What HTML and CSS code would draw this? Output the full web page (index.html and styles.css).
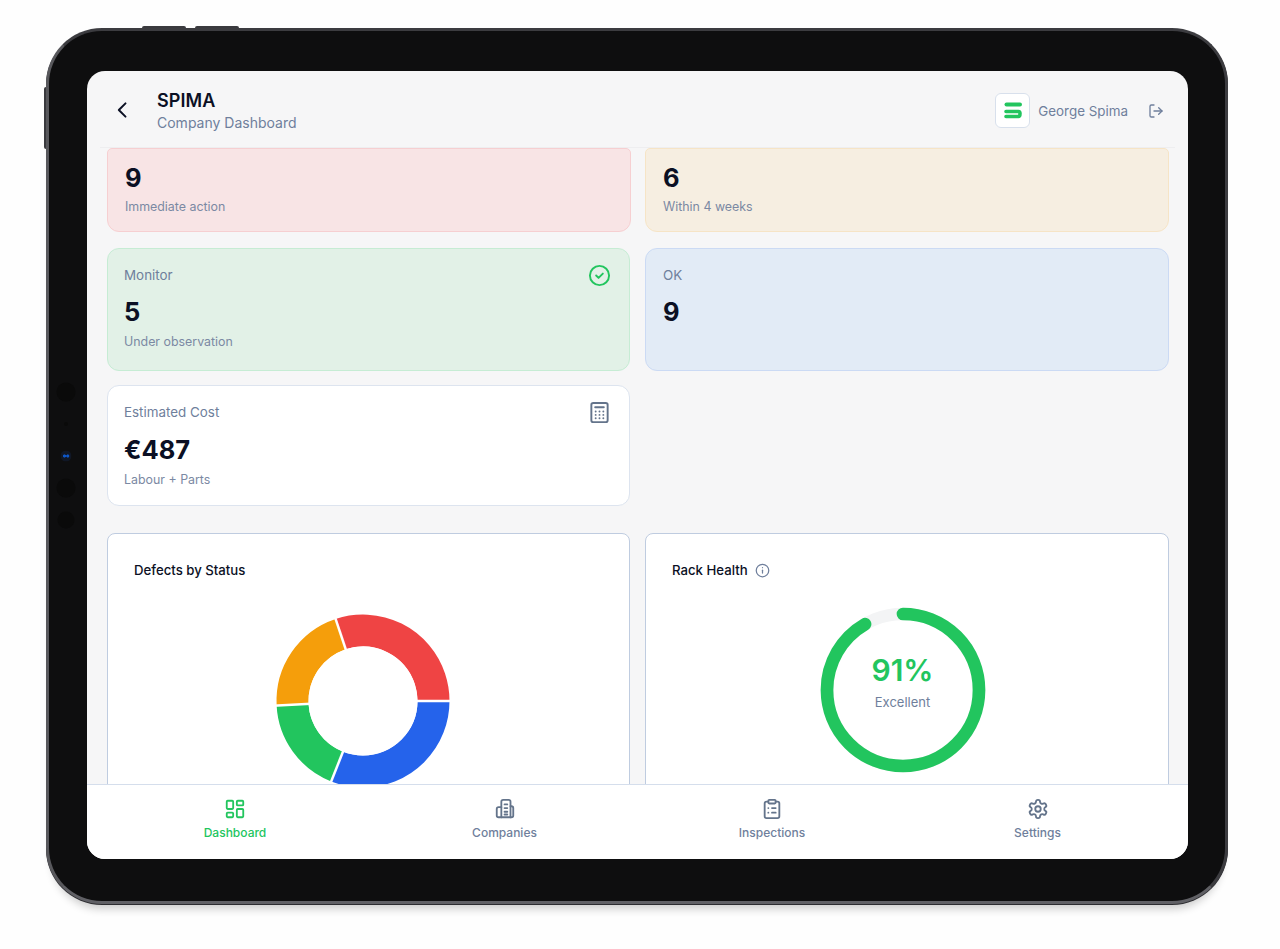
FILE: index.html
```html
<!DOCTYPE html>
<html lang="en">
<head>
<meta charset="utf-8">
<title>SPIMA Company Dashboard</title>
<link rel="stylesheet" href="styles.css">
</head>
<body>
<div class="device">
  <span class="btn btn-top-a"></span>
  <span class="btn btn-top-b"></span>
  <span class="btn btn-left"></span>
  <span class="lens lens-a"></span>
  <span class="lens lens-b"></span>
  <span class="lens lens-c"></span>
  <span class="lens lens-d"></span>
  <span class="lens lens-e"></span>
  <div class="screen">
    <header class="header">
      <svg class="back" viewBox="0 0 24 24" fill="none" stroke="currentColor" stroke-width="2.4" stroke-linecap="round" stroke-linejoin="round"><path d="M15 4 7 12l8 8"/></svg>
      <div class="titles">
        <div class="title">SPIMA</div>
        <div class="subtitle">Company Dashboard</div>
      </div>
      <div class="user">
        <div class="logo">
          <svg viewBox="0 0 18 18" fill="none" stroke="#22c55e" stroke-width="4" stroke-linecap="round" stroke-linejoin="round"><path d="M2.500 2.500H16"/><path d="M2 9.500H14.500Q16 9.500 16 11.500Q16 14.500 14.500 14.500H2" stroke-width="3.600"/></svg>
        </div>
        <span class="user-name">George Spima</span>
        <svg class="logout" viewBox="0 0 24 24" fill="none" stroke="currentColor" stroke-width="2" stroke-linecap="round" stroke-linejoin="round"><path d="M9 21H5a2 2 0 0 1-2-2V5a2 2 0 0 1 2-2h4"/><path d="m16 17 5-5-5-5"/><path d="M21 12H9"/></svg>
      </div>
    </header>
    <main class="content">
      <section class="stats">
        <article class="card cut red">
          <div class="num">9</div>
          <div class="sub">Immediate action</div>
        </article>
        <article class="card cut orange">
          <div class="num">6</div>
          <div class="sub">Within 4 weeks</div>
        </article>
        <article class="card green">
          <div class="card-head">
            <span class="label">Monitor</span>
            <svg class="card-icon icon-green" viewBox="0 0 24 24" fill="none" stroke="currentColor" stroke-width="2" stroke-linecap="round" stroke-linejoin="round"><circle cx="12" cy="12" r="10"/><path d="m8.500 12 2.500 2.500 4.500-4.500"/></svg>
          </div>
          <div class="num">5</div>
          <div class="sub">Under observation</div>
        </article>
        <article class="card blue">
          <div class="card-head">
            <span class="label">OK</span>
          </div>
          <div class="num">9</div>
        </article>
        <article class="card white">
          <div class="card-head">
            <span class="label">Estimated Cost</span>
            <svg class="card-icon icon-slate" viewBox="0 0 24 24" fill="none" stroke="currentColor" stroke-width="2" stroke-linecap="round" stroke-linejoin="round"><rect x="3.500" y="2" width="17" height="20" rx="2"/><path d="M7.500 6.500h9"/><path d="M8 11h.01M12 11h.01M16 11h.01M8 14.500h.01M12 14.500h.01M16 14.500h.01M8 18h.01M12 18h.01M16 18h.01"/></svg>
          </div>
          <div class="num">€487</div>
          <div class="sub">Labour + Parts</div>
        </article>
      </section>
      <section class="charts">
        <article class="chart">
          <h2 class="chart-title">Defects by Status</h2>
          <svg class="donut" viewBox="0 0 180 180" fill="none" stroke-width="32">
            <circle cx="90" cy="90" r="70.500" stroke="#ef4444" pathLength="360" stroke-dasharray="108.500 251.500" transform="rotate(251.500 90 90)"/>
            <circle cx="90" cy="90" r="70.500" stroke="#2563eb" pathLength="360" stroke-dasharray="111.600 248.400"/>
            <circle cx="90" cy="90" r="70.500" stroke="#22c55e" pathLength="360" stroke-dasharray="65.400 294.600" transform="rotate(111.600 90 90)"/>
            <circle cx="90" cy="90" r="70.500" stroke="#f59e0b" pathLength="360" stroke-dasharray="74.500 285.500" transform="rotate(177 90 90)"/>
            <g stroke="#fff" stroke-width="2.500">
              <line x1="90" y1="90" x2="180" y2="90"/>
              <line x1="90" y1="90" x2="56.600" y2="174.500"/>
              <line x1="90" y1="90" x2="0" y2="94.700"/>
              <line x1="90" y1="90" x2="61.500" y2="4.600"/>
            </g>
            <circle cx="90" cy="90" r="54.500" fill="#fff" stroke="none"/>
          </svg>
        </article>
        <article class="chart">
          <h2 class="chart-title">Rack Health
            <svg class="info" viewBox="0 0 24 24" fill="none" stroke="currentColor" stroke-width="2" stroke-linecap="round" stroke-linejoin="round"><circle cx="12" cy="12" r="10"/><path d="M12 16v-4.500"/><path d="M12 7.500h.01"/></svg>
          </h2>
          <div class="ring-wrap">
            <svg class="ring" viewBox="0 0 166 166" fill="none" stroke-width="12.700">
              <circle cx="83" cy="83" r="76" stroke="#f3f4f5"/>
              <circle cx="83" cy="83" r="76" stroke="#22c55e" stroke-linecap="round" pathLength="360" stroke-dasharray="330 30" transform="rotate(-90 83 83)"/>
            </svg>
            <div class="ring-text">
              <div class="pct">91%</div>
              <div class="pct-label">Excellent</div>
            </div>
          </div>
        </article>
      </section>
    </main>
    <nav class="nav">
      <a class="nav-item active">
        <svg viewBox="0 0 24 24" fill="none" stroke="currentColor" stroke-width="2" stroke-linecap="round" stroke-linejoin="round"><rect x="3" y="3" width="7" height="9" rx="1"/><rect x="14" y="3" width="7" height="5" rx="1"/><rect x="14" y="12" width="7" height="9" rx="1"/><rect x="3" y="16" width="7" height="5" rx="1"/></svg>
        <span>Dashboard</span>
      </a>
      <a class="nav-item">
        <svg viewBox="0 0 24 24" fill="none" stroke="currentColor" stroke-width="2" stroke-linecap="round" stroke-linejoin="round"><path d="M8 21V4a2 2 0 0 1 2-2h6a2 2 0 0 1 2 2v17"/><path d="M8 10H5a2 2 0 0 0-2 2v7a2 2 0 0 0 2 2h14a2 2 0 0 0 2-2v-8a2 2 0 0 0-2-2h-1"/><path d="M11.500 7h3M11.500 11h3M11.500 15h3M11.500 18h3"/></svg>
        <span>Companies</span>
      </a>
      <a class="nav-item">
        <svg viewBox="0 0 24 24" fill="none" stroke="currentColor" stroke-width="2" stroke-linecap="round" stroke-linejoin="round"><rect x="8" y="2" width="8" height="4" rx="1"/><path d="M16 4h2a2 2 0 0 1 2 2v14a2 2 0 0 1-2 2H6a2 2 0 0 1-2-2V6a2 2 0 0 1 2-2h2"/><path d="M12 11h4M12 16h4M8 11h.01M8 16h.01"/></svg>
        <span>Inspections</span>
      </a>
      <a class="nav-item">
        <svg viewBox="0 0 24 24" fill="none" stroke="currentColor" stroke-width="2" stroke-linecap="round" stroke-linejoin="round"><path d="M12.220 2h-.44a2 2 0 0 0-2 2v.18a2 2 0 0 1-1 1.730l-.43.25a2 2 0 0 1-2 0l-.15-.08a2 2 0 0 0-2.730.73l-.22.38a2 2 0 0 0 .73 2.730l.15.1a2 2 0 0 1 1 1.720v.51a2 2 0 0 1-1 1.740l-.15.09a2 2 0 0 0-.73 2.730l.22.38a2 2 0 0 0 2.730.73l.15-.08a2 2 0 0 1 2 0l.43.25a2 2 0 0 1 1 1.730V20a2 2 0 0 0 2 2h.44a2 2 0 0 0 2-2v-.18a2 2 0 0 1 1-1.730l.43-.25a2 2 0 0 1 2 0l.15.08a2 2 0 0 0 2.730-.73l.22-.39a2 2 0 0 0-.73-2.730l-.15-.08a2 2 0 0 1-1-1.740v-.5a2 2 0 0 1 1-1.740l.15-.09a2 2 0 0 0 .73-2.730l-.22-.38a2 2 0 0 0-2.730-.73l-.15.08a2 2 0 0 1-2 0l-.43-.25a2 2 0 0 1-1-1.730V4a2 2 0 0 0-2-2z"/><circle cx="12" cy="12" r="3"/></svg>
        <span>Settings</span>
      </a>
    </nav>
  </div>
</div>
</body>
</html>
```
FILE: styles.css
```css
* { box-sizing: border-box; }
html, body { height: 100%; }
body {
  margin: 0;
  background: #fefefe;
  font-family: Inter, "Liberation Sans", sans-serif;
  color: #0b1024;
  padding: 28px 52px 45px 46px;
  overflow: hidden;
}
.device {
  position: relative;
  width: 1182px;
  height: 876px;
  background: #0e0e0f;
  border-radius: 56px;
  border: 3px solid #3c3c40;
  border-left-color: #58585c;
  border-bottom-color: #606065;
  padding: 40px 37px 42px 38px;
  box-shadow: 0 1px 0 #2c2c30, 0 11px 9px -6px rgba(0, 0, 0, .2);
}
.btn { position: absolute; background: #3a3a3e; }
.btn-top-a, .btn-top-b { top: -5px; width: 44px; height: 2px; border-radius: 2px 2px 0 0; }
.btn-top-a { left: 93px; }
.btn-top-b { left: 146px; }
.btn-left { left: -5px; top: 56px; width: 2px; height: 62px; border-radius: 2px 0 0 2px; }
.lens { position: absolute; border-radius: 50%; background: #0a0a0a; transform: translate(-50%, -50%); left: 17px; }
.lens-a { top: 361px; width: 19px; height: 19px; }
.lens-b { top: 393px; width: 4px; height: 4px; }
.lens-c {
  top: 425px;
  width: 11px;
  height: 11px;
  background:
    radial-gradient(circle at 36% 50%, #0d56c8 0 1.200px, transparent 1.900px),
    radial-gradient(circle at 66% 50%, #0d56c8 0 1.200px, transparent 1.900px),
    #101726;
}
.lens-d { top: 457px; width: 19px; height: 19px; }
.lens-e { top: 489px; width: 17px; height: 17px; }

.screen {
  display: flex;
  flex-direction: column;
  height: 100%;
  background: #f6f6f7;
  border-radius: 18px;
  overflow: hidden;
}
.header {
  flex: 0 0 77px;
  display: flex;
  align-items: center;
  padding: 0 24px 0 26px;
  position: relative;
}
.header::after {
  content: "";
  position: absolute;
  left: 13px;
  right: 13px;
  bottom: 0;
  height: 1px;
  background: #eeeef0;
}
.back { width: 20px; height: 20px; color: #0b1024; margin-right: 24px; }
.titles { flex: 1; margin-top: 5px; }
.title { font-size: 18px; line-height: 22px; font-weight: 600; letter-spacing: .1px; }
.subtitle { font-size: 14px; line-height: 22px; color: #6f7f9c; }
.user { display: flex; align-items: center; margin-top: 2px; }
.logo {
  width: 35px;
  height: 35px;
  display: flex;
  align-items: center;
  justify-content: center;
  background: #fff;
  border: 1px solid #d8e0ec;
  border-radius: 6px;
  margin-right: 8px;
}
.logo svg { width: 18px; height: 18px; }
.user-name { font-size: 13.400px; color: #6f7f9c; margin-right: 20px; }
.logout { width: 16px; height: 16px; color: #6f7f9c; }

.content { flex: 1; min-height: 0; overflow: hidden; padding: 0 19px 0 20px; }
.stats {
  display: grid;
  grid-template-columns: 523px 524px;
  grid-template-rows: 85px 122px 121px;
  gap: 15px;
}
.card { border: 1px solid; border-radius: 12px; padding: 16px 18px 16px 16px; }
.green, .blue { height: 123px; }
.blue { padding-left: 17px; }
.cut { height: 84px; border-radius: 5px 5px 12px 12px; padding: 13px 17px 0; }
.red { background: #f8e4e5; border-color: #f6cfd1; margin-right: -1px; }
.orange { background: #f6eee1; border-color: #f6e4c6; }
.green { background: #e2f1e7; border-color: #c6ecd4; }
.blue { background: #e2ebf6; border-color: #cbdaf4; }
.white { background: #fff; border-color: #dde4ef; }
.card-head { display: flex; align-items: center; justify-content: space-between; height: 20px; margin-bottom: 11px; }
.white .card-head { margin-bottom: 12px; }
.label { font-size: 13.400px; color: #6f7f9c; }
.card-icon { width: 23px; height: 23px; }
.icon-green { color: #22c55e; }
.icon-slate { color: #64748b; }
.num { font-size: 25.500px; line-height: 32px; font-weight: 700; color: #0b1024; }
.sub { font-size: 12.400px; line-height: 16px; color: #7b89a3; margin-top: 5px; }
.green .sub, .white .sub { margin-top: 6px; }

.charts {
  display: grid;
  grid-template-columns: 523px 524px;
  column-gap: 15px;
  margin-top: 27px;
}
.chart {
  position: relative;
  height: 300px;
  background: #fff;
  border: 1px solid #bfcce0;
  border-radius: 8px;
  padding: 27px 26px;
}
.chart-title {
  display: flex;
  align-items: center;
  gap: 7px;
  margin: 0;
  font-size: 13.200px;
  line-height: 18px;
  font-weight: 500;
  color: #0b1024;
}
.info { width: 15px; height: 15px; color: #6f7f9c; }
.donut { display: block; width: 180px; height: 180px; margin: 31.500px auto 0; position: relative; left: -5.500px; }
.ring-wrap { position: relative; width: 166px; height: 166px; margin: 28px auto 0; left: -4.500px; }
.ring { display: block; width: 166px; height: 166px; }
.ring-text {
  position: absolute;
  inset: 0;
  display: flex;
  flex-direction: column;
  align-items: center;
  justify-content: center;
  padding-bottom: 18px;
}
.pct { font-size: 30px; line-height: 36px; font-weight: 600; color: #22c55e; }
.pct-label { font-size: 13px; line-height: 18px; color: #6f7f9c; margin-top: 5px; }

.nav {
  flex: 0 0 75px;
  display: grid;
  grid-template-columns: 270px 269px 266px 265px;
  padding: 0 13px;
  background: #fff;
  border-top: 1px solid #d5deec;
  position: relative;
}
.nav-item {
  display: flex;
  flex-direction: column;
  align-items: center;
  padding-top: 13px;
  font-size: 12px;
  line-height: 16px;
  font-weight: 500;
  color: #6f7f9c;
}
.nav-item svg { width: 22px; height: 22px; margin-bottom: 5px; color: #64748b; }
.nav-item.active, .nav-item.active svg { color: #22c55e; }
```
